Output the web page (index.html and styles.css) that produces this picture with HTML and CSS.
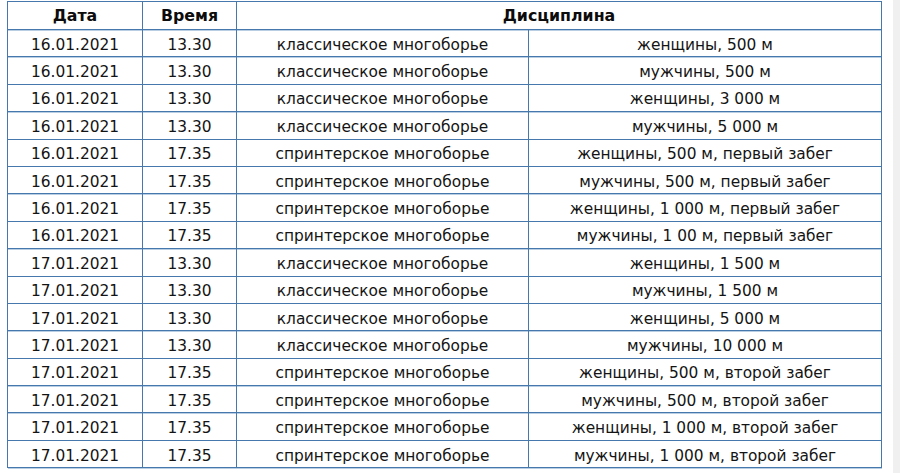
FILE: index.html
```html
<!DOCTYPE html>
<html lang="ru">
<head>
<meta charset="utf-8">
<link rel="stylesheet" href="styles.css">
</head>
<body>
<div class="page">
  <main class="content">
    <table class="schedule">
      <colgroup>
        <col class="c-date"><col class="c-time"><col class="c-disc"><col class="c-sub">
      </colgroup>
      <thead>
        <tr><th>Дата</th><th>Время</th><th colspan="2">Дисциплина</th></tr>
      </thead>
      <tbody>
        <tr><td>16.01.2021</td><td>13.30</td><td>классическое многоборье</td><td>женщины, 500 м</td></tr>
        <tr><td>16.01.2021</td><td>13.30</td><td>классическое многоборье</td><td>мужчины, 500 м</td></tr>
        <tr><td>16.01.2021</td><td>13.30</td><td>классическое многоборье</td><td>женщины, 3 000 м</td></tr>
        <tr><td>16.01.2021</td><td>13.30</td><td>классическое многоборье</td><td>мужчины, 5 000 м</td></tr>
        <tr><td>16.01.2021</td><td>17.35</td><td>спринтерское многоборье</td><td>женщины, 500 м, первый забег</td></tr>
        <tr><td>16.01.2021</td><td>17.35</td><td>спринтерское многоборье</td><td>мужчины, 500 м, первый забег</td></tr>
        <tr><td>16.01.2021</td><td>17.35</td><td>спринтерское многоборье</td><td>женщины, 1 000 м, первый забег</td></tr>
        <tr><td>16.01.2021</td><td>17.35</td><td>спринтерское многоборье</td><td>мужчины, 1 00 м, первый забег</td></tr>
        <tr><td>17.01.2021</td><td>13.30</td><td>классическое многоборье</td><td>женщины, 1 500 м</td></tr>
        <tr><td>17.01.2021</td><td>13.30</td><td>классическое многоборье</td><td>мужчины, 1 500 м</td></tr>
        <tr><td>17.01.2021</td><td>13.30</td><td>классическое многоборье</td><td>женщины, 5 000 м</td></tr>
        <tr><td>17.01.2021</td><td>13.30</td><td>классическое многоборье</td><td>мужчины, 10 000 м</td></tr>
        <tr><td>17.01.2021</td><td>17.35</td><td>спринтерское многоборье</td><td>женщины, 500 м, второй забег</td></tr>
        <tr><td>17.01.2021</td><td>17.35</td><td>спринтерское многоборье</td><td>мужчины, 500 м, второй забег</td></tr>
        <tr><td>17.01.2021</td><td>17.35</td><td>спринтерское многоборье</td><td>женщины, 1 000 м, второй забег</td></tr>
        <tr><td>17.01.2021</td><td>17.35</td><td>спринтерское многоборье</td><td>мужчины, 1 000 м, второй забег</td></tr>
      </tbody>
    </table>
  </main>
  <aside class="scroll-strip"></aside>
</div>
</body>
</html>
```

FILE: styles.css
```css
html, body {
  margin: 0;
  padding: 0;
  background: #ffffff;
}
body {
  font-family: "DejaVu Sans", Verdana, sans-serif;
  color: #141414;
}
.page {
  display: flex;
  width: 900px;
  height: 473px;
  overflow: hidden;
}
.content {
  flex: 1;
  padding: 1px 0 0 7px;
}
.scroll-strip {
  width: 7px;
  background: #f0f0f0;
}
.schedule {
  border-collapse: collapse;
  table-layout: fixed;
  width: 874px;
  font-size: 15.4px;
}
.c-date { width: 135px; }
.c-time { width: 94px; }
.c-disc { width: 292px; }
.c-sub { width: 353px; }
.schedule th,
.schedule td {
  border: 1px solid #4677ad;
  text-align: center;
  padding: 0;
  white-space: nowrap;
  box-shadow: 0 1px 0 #b9cde3;
}
.schedule th {
  height: 27px;
  font-size: 15.8px;
  font-weight: bold;
  color: #0c0c0c;
}
.schedule td {
  height: 26.33px;
  padding-top: 3px;
  box-sizing: border-box;
}
.schedule tbody tr {
  height: 27.4px;
}
```
